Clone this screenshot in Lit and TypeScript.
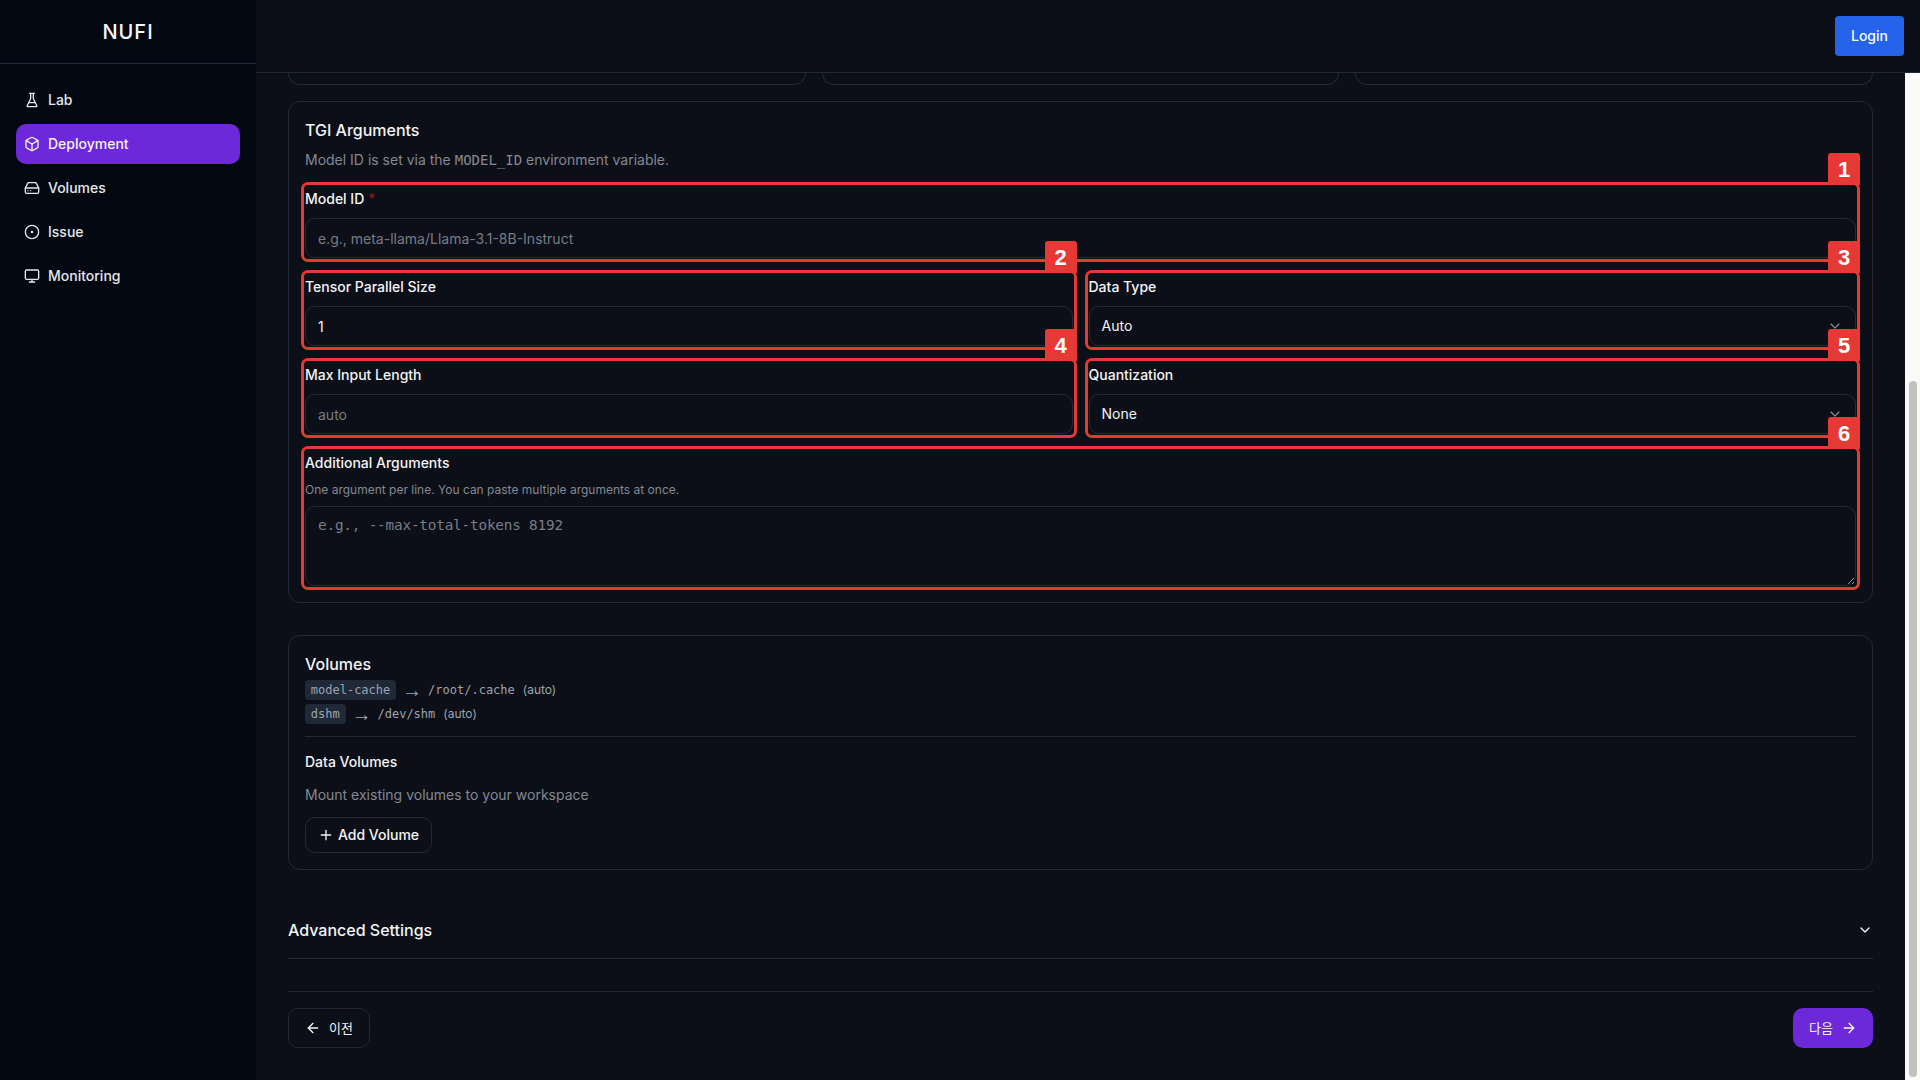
import { LitElement, html, css, svg } from "lit";
import { customElement } from "lit/decorators.js";

const ic = (content: unknown, cls = "icon") =>
  html`<svg class=${cls} viewBox="0 0 24 24" fill="none" stroke="currentColor" stroke-width="2" stroke-linecap="round" stroke-linejoin="round">${content}</svg>`;

const icons = {
  flask: svg`<path d="M10 2v7.527a2 2 0 0 1-.211.896L4.72 20.55a1 1 0 0 0 .9 1.45h12.76a1 1 0 0 0 .9-1.45l-5.069-10.127A2 2 0 0 1 14 9.527V2"/><path d="M8.5 2h7"/><path d="M7 16h10"/>`,
  box: svg`<path d="M21 8a2 2 0 0 0-1-1.73l-7-4a2 2 0 0 0-2 0l-7 4A2 2 0 0 0 3 8v8a2 2 0 0 0 1 1.73l7 4a2 2 0 0 0 2 0l7-4A2 2 0 0 0 21 16Z"/><path d="m3.3 7 8.7 5 8.7-5"/><path d="M12 22V12"/>`,
  drive: svg`<line x1="22" x2="2" y1="12" y2="12"/><path d="M5.45 5.11 2 12v6a2 2 0 0 0 2 2h16a2 2 0 0 0 2-2v-6l-3.45-6.89A2 2 0 0 0 16.76 4H7.24a2 2 0 0 0-1.79 1.11z"/><line x1="6" x2="6.01" y1="16" y2="16"/><line x1="10" x2="10.01" y1="16" y2="16"/>`,
  dot: svg`<circle cx="12" cy="12" r="10"/><circle cx="12" cy="12" r="1"/>`,
  monitor: svg`<rect width="20" height="14" x="2" y="3" rx="2"/><line x1="8" x2="16" y1="21" y2="21"/><line x1="12" x2="12" y1="17" y2="21"/>`,
  chevron: svg`<path d="m6 9 6 6 6-6"/>`,
  plus: svg`<path d="M5 12h14"/><path d="M12 5v14"/>`,
  left: svg`<path d="m12 19-7-7 7-7"/><path d="M19 12H5"/>`,
  right: svg`<path d="M5 12h14"/><path d="m12 5 7 7-7 7"/>`,
};

const nav = [
  { label: "Lab", icon: icons.flask },
  { label: "Deployment", icon: icons.box, active: true },
  { label: "Volumes", icon: icons.drive },
  { label: "Issue", icon: icons.dot },
  { label: "Monitoring", icon: icons.monitor },
];

@customElement("app-root")
export class AppRoot extends LitElement {
  static styles = css`
    :host {
      display: block;
      height: 1080px;
      overflow: hidden;
      background: #0c0f17;
      color: #f3f4f6;
      font-family: Inter, "Noto Sans CJK KR", sans-serif;
      font-size: 14px;
      line-height: 20px;
    }
    * { box-sizing: border-box; }
    .app { display: grid; grid-template-columns: 256px 1fr; height: 1080px; }
    .side { background: #030712; }
    .logo {
      height: 64px; border-bottom: 1px solid #1f2937;
      display: flex; align-items: center; justify-content: center;
      font-size: 20px; font-weight: 500; letter-spacing: 1px; color: #f9fafb;
    }
    .nav { display: flex; flex-direction: column; gap: 4px; padding: 16px; }
    .nav-item {
      height: 40px; display: flex; align-items: center; gap: 8px;
      padding: 0 8px; border-radius: 10px; font-weight: 500; color: #e5e7eb;
    }
    .nav-item.active { background: #6d28d9; color: #f3f4f6; }
    .icon { width: 16px; height: 16px; flex: none; display: block; }
    .main { display: flex; flex-direction: column; min-width: 0; height: 1080px; }
    .head {
      height: 73px; flex: none; border-bottom: 1px solid #1f2937;
      display: flex; align-items: center; justify-content: flex-end; padding: 0 16px 1px;
    }
    .login {
      height: 40px; padding: 0 16px; border-radius: 4px; background: #2563eb;
      color: #f9fafb; display: flex; align-items: center; font-weight: 500;
    }
    .body { flex: 1; display: flex; min-height: 0; }
    .scroll { flex: 1; min-width: 0; overflow: hidden; padding: 0 32px; }
    .track { width: 15px; flex: none; background: #fafafa; padding: 308px 3px 3px 4px; }
    .thumb { height: 100%; background: #c1c1c1; border-radius: 4px; }
    .stubs { display: grid; grid-template-columns: repeat(3, 1fr); gap: 16px; height: 12px; margin-bottom: 16px; }
    .stub { border: 1px solid #1f2937; border-top: 0; border-radius: 0 0 12px 12px; }
    .card { border: 1px solid #1f2937; border-radius: 12px; padding: 16px; }
    .card + .card { margin-top: 32px; }
    .title { font-size: 16px; line-height: 24px; font-weight: 500; color: #f3f4f6; }
    .sub { margin-top: 8px; color: #838892; }
    .mono { font-family: "DejaVu Sans Mono", monospace; }
    .grid { margin-top: 16px; display: grid; grid-template-columns: 1fr 1fr; gap: 16px; }
    .wide { grid-column: 1 / -1; }
    .field {
      position: relative; display: flex; flex-direction: column;
      outline: 3px solid #e53935; outline-offset: 1px; border-radius: 3px;
    }
    .badge {
      position: absolute; top: -33px; right: -4px; width: 32px; height: 32px;
      background: #e53935; color: #fff; border-radius: 3px 3px 0 0;
      font: 700 22px/34px "Liberation Sans", Arial, sans-serif; text-align: center;
    }
    label { font-weight: 500; color: #f3f4f6; display: block; }
    .field label { padding-top: 3px; height: 26px; }
    .req { color: #7f1d1d; }
    .help { font-size: 12px; line-height: 16px; margin-top: 6px; color: #838892; }
    .ctl {
      margin-top: 6px; height: 40px; width: 100%; border: 1px solid #1f2937; border-radius: 10px;
      background: transparent; padding: 0 12px; color: #f3f4f6; font: 14px/20px Inter, sans-serif;
      display: flex; align-items: center; justify-content: space-between; outline: none;
    }
    .ctl::placeholder { color: #777c87; opacity: 1; }
    .chev { opacity: 0.5; }
    textarea.ctl {
      margin-top: 8px; height: 80px; padding: 8px 12px; display: block;
      font: 14.4px/20px "DejaVu Sans Mono", monospace; letter-spacing: -0.22px; resize: vertical;
    }
    .vol-list { display: flex; flex-direction: column; gap: 4px; margin-top: 4px; }
    .vol { display: flex; align-items: center; gap: 8px; height: 20px; font-size: 12px; color: #9ca3af; }
    .chip { background: #1f2937; border-radius: 4px; padding: 0 5.8px; height: 20px; line-height: 20px; font-family: "DejaVu Sans Mono", monospace; color: #9ca3af; }
    .path { font-family: "DejaVu Sans Mono", monospace; }
    .arrow { font: 20px/20px "Liberation Sans", sans-serif; width: 20px; margin: 0 -2px; }
    .rule { height: 1px; background: #1f2937; margin: 12px 0 15px; }
    .dv-desc { margin-top: 13px; color: #838892; }
    .btn {
      display: inline-flex; align-items: center; gap: 4px; height: 36px; padding: 0 12px;
      border: 1px solid #1f2937; border-radius: 10px; font-weight: 500; color: #f3f4f6;
    }
    .add { margin-top: 12px; }
    .adv {
      margin-top: 16px; height: 73px; padding-top: 16px; border-bottom: 1px solid #1f2937;
      display: flex; justify-content: space-between; align-items: flex-start;
    }
    .adv .title { line-height: 24px; padding-top: 16px; }
    .adv .icon { margin-top: 20px; color: #f3f4f6; }
    .foot {
      margin-top: 32px; border-top: 1px solid #1f2937; padding-top: 16px;
      display: flex; justify-content: space-between;
    }
    .foot .btn { height: 40px; padding: 0 16px; gap: 8px; }
    .kr { font-family: "Noto Sans CJK KR", sans-serif; font-size: 13px; font-weight: 400; }
    .foot .next { background: #6d28d9; border: 0; color: #f3f4f6; }
  `;

  private field(n: number, name: string, ctl: unknown, wide = false, help = "", req = false) {
    return html`<div class="field ${wide ? "wide" : ""}">
      <label>${name}${req ? html` <span class="req">*</span>` : ""}</label>
      ${help ? html`<div class="help">${help}</div>` : ""}
      ${ctl}
      <div class="badge">${n}</div>
    </div>`;
  }

  private select(v: string) {
    return html`<div class="ctl"><span>${v}</span>${ic(icons.chevron, "icon chev")}</div>`;
  }

  render() {
    return html`<div class="app">
      <aside class="side">
        <div class="logo">NUFI</div>
        <nav class="nav">
          ${nav.map((n) => html`<div class="nav-item ${n.active ? "active" : ""}">${ic(n.icon)}<span>${n.label}</span></div>`)}
        </nav>
      </aside>
      <div class="main">
        <header class="head"><div class="login">Login</div></header>
        <div class="body">
          <div class="scroll">
            <div class="stubs"><div class="stub"></div><div class="stub"></div><div class="stub"></div></div>
            <section class="card">
              <div class="title">TGI Arguments</div>
              <div class="sub">Model ID is set via the <span class="mono">MODEL_ID</span> environment variable.</div>
              <div class="grid">
                ${this.field(1, "Model ID", html`<input class="ctl" placeholder="e.g., meta-llama/Llama-3.1-8B-Instruct" />`, true, "", true)}
                ${this.field(2, "Tensor Parallel Size", html`<input class="ctl" value="1" />`)}
                ${this.field(3, "Data Type", this.select("Auto"))}
                ${this.field(4, "Max Input Length", html`<input class="ctl" placeholder="auto" />`)}
                ${this.field(5, "Quantization", this.select("None"))}
                ${this.field(6, "Additional Arguments", html`<textarea class="ctl" placeholder="e.g., --max-total-tokens 8192"></textarea>`, true, "One argument per line. You can paste multiple arguments at once.")}
              </div>
            </section>
            <section class="card">
              <div class="title">Volumes</div>
              <div class="vol-list">
                <div class="vol"><span class="chip">model-cache</span><span class="arrow">→</span><span class="path">/root/.cache</span><span>(auto)</span></div>
                <div class="vol"><span class="chip">dshm</span><span class="arrow">→</span><span class="path">/dev/shm</span><span>(auto)</span></div>
              </div>
              <div class="rule"></div>
              <label>Data Volumes</label>
              <div class="dv-desc">Mount existing volumes to your workspace</div>
              <div class="btn add">${ic(icons.plus)}<span>Add Volume</span></div>
            </section>
            <div class="adv"><div class="title">Advanced Settings</div>${ic(icons.chevron)}</div>
            <div class="foot">
              <div class="btn">${ic(icons.left)}<span class="kr">이전</span></div>
              <div class="btn next"><span class="kr">다음</span>${ic(icons.right)}</div>
            </div>
          </div>
          <div class="track"><div class="thumb"></div></div>
        </div>
      </div>
    </div>`;
  }
}
